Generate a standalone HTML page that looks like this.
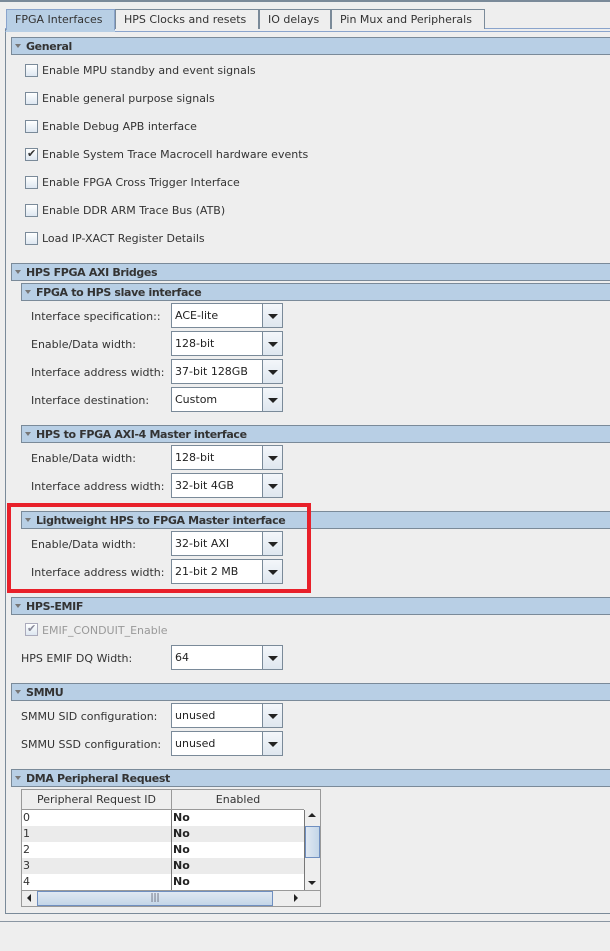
<!DOCTYPE html><html><head><style>
*{box-sizing:border-box}
body{margin:0;width:610px;height:951px;background:#eeeeee;font-family:"DejaVu Sans","Liberation Sans",sans-serif;font-size:11px;color:#333;position:relative;overflow:hidden}
.a{position:absolute}
.tab{position:absolute;top:9px;height:20px;border:1px solid #7a8a99;border-bottom:none;background:#eeeeee;padding:3px 8px 0;white-space:nowrap;color:#333}
.hdr{position:absolute;height:18px;background:#b8cfe5;border:1px solid #7a8a99;right:-2px;font-weight:bold;padding:2px 0 0 14px;color:#333;letter-spacing:-0.35px}
.hdr:before{content:"";position:absolute;left:3px;top:6px;border-left:3.5px solid transparent;border-right:3.5px solid transparent;border-top:4px solid #777}
.cb{position:absolute;left:25px;width:13px;height:13px;border:1px solid #7a8a99;background:linear-gradient(#fff,#dde7f1)}
.cl{position:absolute;left:42px}
.lb{position:absolute;left:31px}
.co{position:absolute;left:171px;width:112px;height:25px;border:1px solid #7a8a99;background:#fff;padding:5px 0 0 3px;color:#222}
.co:after{content:"";position:absolute;right:0;top:0;width:19px;height:23px;border-left:1px solid #7a8a99;background:linear-gradient(#f3f6fa,#dfe7ef)}
.co i{position:absolute;right:4px;top:10px;border-left:5px solid transparent;border-right:5px solid transparent;border-top:5px solid #222;z-index:2}
.row{position:absolute;left:22px;width:282px;height:16px}
.row span{position:absolute;left:1px;top:1px}
.row b{position:absolute;left:151px;top:1px;color:#222}
</style></head><body>
<div class="a" style="left:0;top:0;width:610px;height:2px;background:#7a8a99"></div>
<div class="a" style="left:5px;top:28px;width:610px;height:886px;border:1px solid #7a8a99;border-top:none"></div>
<div class="a" style="left:5px;top:28px;width:605px;height:2px;border-top:1px solid #8aa4cc;"></div>
<div class="a" style="left:5px;top:31px;width:605px;height:1px;background:#8aa4cc"></div>
<div class="tab" style="left:6px;width:109px;background:#b8cfe5;height:21px;border-color:#8aa4cc">FPGA Interfaces</div>
<div class="tab" style="left:115px;width:144px">HPS Clocks and resets</div>
<div class="tab" style="left:259px;width:72px">IO delays</div>
<div class="tab" style="left:331px;width:154px">Pin Mux and Peripherals</div>
<div class="a" style="left:6px;top:30px;width:109px;height:2px;background:#b8cfe5"></div>

<div class="hdr" style="left:11px;top:37px">General</div>
<div class="cb" style="top:64px"></div><div class="cl" style="top:64px">Enable MPU standby and event signals</div>
<div class="cb" style="top:92px"></div><div class="cl" style="top:92px">Enable general purpose signals</div>
<div class="cb" style="top:120px"></div><div class="cl" style="top:120px">Enable Debug APB interface</div>
<div class="cb" style="top:148px;font-size:11px;line-height:10px;padding-left:1px;color:#333">✔</div><div class="cl" style="top:148px">Enable System Trace Macrocell hardware events</div>
<div class="cb" style="top:176px"></div><div class="cl" style="top:176px">Enable FPGA Cross Trigger Interface</div>
<div class="cb" style="top:204px"></div><div class="cl" style="top:204px">Enable DDR ARM Trace Bus (ATB)</div>
<div class="cb" style="top:232px"></div><div class="cl" style="top:232px">Load IP-XACT Register Details</div>

<div class="hdr" style="left:11px;top:263px">HPS FPGA AXI Bridges</div>
<div class="hdr" style="left:21px;top:283px">FPGA to HPS slave interface</div>
<div class="lb" style="top:310px">Interface specification::</div><div class="co" style="top:303px">ACE-lite<i></i></div>
<div class="lb" style="top:338px">Enable/Data width:</div><div class="co" style="top:331px">128-bit<i></i></div>
<div class="lb" style="top:366px">Interface address width:</div><div class="co" style="top:359px">37-bit 128GB<i></i></div>
<div class="lb" style="top:394px">Interface destination:</div><div class="co" style="top:387px">Custom<i></i></div>

<div class="hdr" style="left:21px;top:425px">HPS to FPGA AXI-4 Master interface</div>
<div class="lb" style="top:452px">Enable/Data width:</div><div class="co" style="top:445px">128-bit<i></i></div>
<div class="lb" style="top:480px">Interface address width:</div><div class="co" style="top:473px">32-bit 4GB<i></i></div>

<div class="hdr" style="left:21px;top:511px">Lightweight HPS to FPGA Master interface</div>
<div class="lb" style="top:538px">Enable/Data width:</div><div class="co" style="top:531px">32-bit AXI<i></i></div>
<div class="lb" style="top:566px">Interface address width:</div><div class="co" style="top:559px">21-bit 2 MB<i></i></div>
<div class="a" style="left:7px;top:503px;width:304px;height:90px;border:4px solid #e8202a"></div>

<div class="hdr" style="left:11px;top:597px">HPS-EMIF</div>
<div class="cb" style="top:623px;border-color:#aab;color:#889;line-height:10px;padding-left:1px">✔</div><div class="cl" style="top:624px;color:#999">EMIF_CONDUIT_Enable</div>
<div class="lb" style="left:21px;top:652px">HPS EMIF DQ Width:</div><div class="co" style="top:645px">64<i></i></div>

<div class="hdr" style="left:11px;top:683px">SMMU</div>
<div class="lb" style="left:21px;top:710px">SMMU SID configuration:</div><div class="co" style="top:703px">unused<i></i></div>
<div class="lb" style="left:21px;top:738px">SMMU SSD configuration:</div><div class="co" style="top:731px">unused<i></i></div>

<div class="hdr" style="left:11px;top:769px">DMA Peripheral Request</div>
<div class="a" style="left:21px;top:789px;width:300px;height:118px;border:1px solid #999;background:#eee"></div>
<div class="a" style="left:22px;top:790px;width:150px;height:20px;border-right:1px solid #999;border-bottom:1px solid #999;text-align:center;padding-top:3px">Peripheral Request ID</div>
<div class="a" style="left:172px;top:790px;width:132px;height:20px;border-bottom:1px solid #999;text-align:center;padding-top:3px">Enabled</div>
<div class="row" style="top:810px;background:#fff"><span>0</span><b>No</b></div>
<div class="row" style="top:826px;background:#ebebeb"><span>1</span><b>No</b></div>
<div class="row" style="top:842px;background:#fff"><span>2</span><b>No</b></div>
<div class="row" style="top:858px;background:#ebebeb"><span>3</span><b>No</b></div>
<div class="row" style="top:874px;background:#fff"><span>4</span><b>No</b></div>
<div class="a" style="left:171px;top:810px;width:1px;height:80px;background:#777"></div>
<div class="a" style="left:304px;top:810px;width:1px;height:80px;background:#777"></div>
<div class="a" style="left:305px;top:826px;width:15px;height:32px;background:linear-gradient(90deg,#dfe8f2,#c4d6e8);border:1px solid #6f8fc0"></div>
<div class="a" style="left:308px;top:813px;border-left:4px solid transparent;border-right:4px solid transparent;border-bottom:4px solid #222"></div>
<div class="a" style="left:308px;top:881px;border-left:4px solid transparent;border-right:4px solid transparent;border-top:4px solid #222"></div>
<div class="a" style="left:22px;top:890px;width:298px;height:1px;background:#999"></div>
<div class="a" style="left:37px;top:891px;width:236px;height:15px;background:linear-gradient(#dfe8f2,#c4d6e8);border:1px solid #6f8fc0;text-align:center;font-size:9px;line-height:12px;color:#556">|||</div>
<div class="a" style="left:27px;top:894px;border-top:4px solid transparent;border-bottom:4px solid transparent;border-right:4px solid #222"></div>
<div class="a" style="left:294px;top:894px;border-top:4px solid transparent;border-bottom:4px solid transparent;border-left:4px solid #222"></div>
<div class="a" style="left:0;top:921px;width:610px;height:1px;background:#8a96a3"></div>
</body></html>
